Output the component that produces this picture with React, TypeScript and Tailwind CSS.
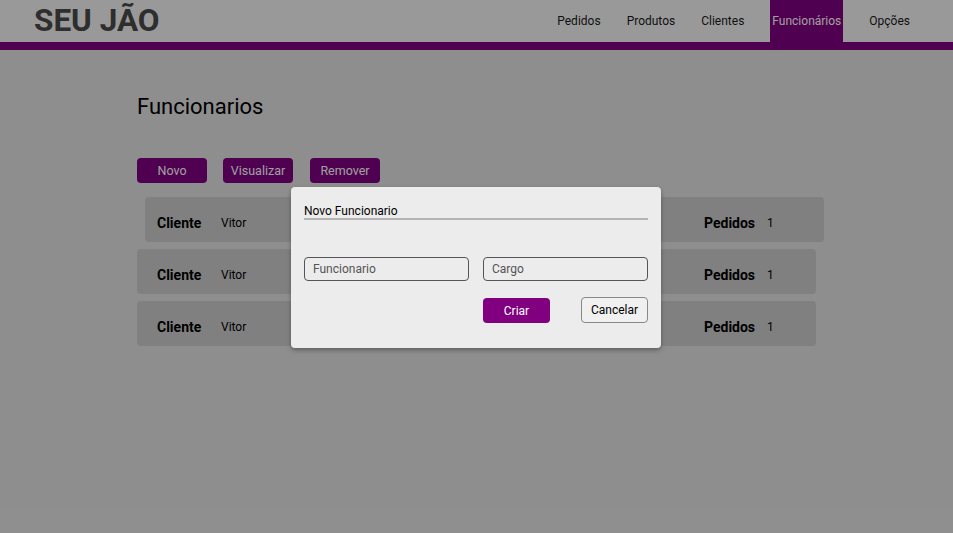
import React from "react";

const navItems = ["Pedidos", "Produtos", "Clientes", "Funcionários", "Opções"];

function Row({ first }: { first?: boolean }) {
  return (
    <div
      className={
        "flex items-center h-[45px] w-[679px] rounded bg-[#cdcdcd] pt-[7px] " +
        (first ? "ml-2 pl-3" : "pl-5")
      }
    >
      <div className="flex items-center w-[547px]">
        <span className="w-[64px] text-[14px] font-bold">Cliente</span>
        <span className="text-[12px]">Vitor</span>
      </div>
      <span className="w-[63px] text-[14px] font-bold">Pedidos</span>
      <span className="text-[12px]">1</span>
    </div>
  );
}

export default function App() {
  return (
    <div className="relative min-h-screen bg-[#e4e4e4] text-black font-['Roboto',sans-serif]">
      {/* Cabeçalho */}
      <header className="bg-[#f6f6f6] border-b-8 border-[#800080]">
        <div className="flex items-center justify-between h-[42px] pl-[34px] pr-[43px]">
          <h1 className="text-[31.5px] font-bold text-[#4a4a4a] leading-none">SEU JÃO</h1>
          <nav className="flex h-full gap-[26px] text-[12px] text-[#1a1a1a]">
            {navItems.map((item) =>
              item === "Funcionários" ? (
                <a key={item} className="flex items-center h-full px-[2px] bg-[#800080] text-white">
                  {item}
                </a>
              ) : (
                <a key={item} className="flex items-center h-full">
                  {item}
                </a>
              )
            )}
          </nav>
        </div>
      </header>

      <main className="pl-[137px] pt-[44px]">
        <h2 className="text-[22px] leading-[26px]">Funcionarios</h2>

        <div className="flex gap-4 mt-[38px]">
          {["Novo", "Visualizar", "Remover"].map((b, i) => (
            <button
              key={b}
              className={
                "w-[70px] h-[25px] rounded-sm bg-[#800080] text-white text-[12.5px] pt-[1px] " +
                (i === 2 ? "ml-[1px]" : "")
              }
            >
              {b}
            </button>
          ))}
        </div>

        <div className="flex flex-col gap-[7px] mt-[14px]">
          <Row first />
          <Row />
          <Row />
        </div>
      </main>

      {/* Sobreposição do modal */}
      <div className="absolute inset-0 bg-black/[0.375]">
        <div className="absolute left-[291px] top-[187px] w-[370px] h-[161px] rounded-sm bg-[#ececec] shadow-[0_2px_4px_rgba(0,0,0,0.35)] px-[13px] pt-[17px]">
          <div className="text-[12px] leading-[14px] border-b-2 border-[#b3b3b3]">
            Novo Funcionario
          </div>
          <div className="flex justify-between mt-[37px]">
            <input
              placeholder="Funcionario"
              className="w-[165px] h-[24px] border border-[#555] rounded-sm bg-transparent px-2 text-[12px] placeholder:text-[#555] outline-none"
            />
            <input
              placeholder="Cargo"
              className="w-[165px] h-[24px] border border-[#555] rounded-sm bg-transparent px-2 text-[12px] placeholder:text-[#555] outline-none"
            />
          </div>
          <div className="flex justify-end gap-[31px] mt-[16px]">
            <button className="w-[67px] h-[25px] mt-[1px] rounded-sm bg-[#800080] text-white text-[12px]">
              Criar
            </button>
            <button className="w-[67px] h-[26px] rounded-sm border border-[#888] bg-[#f0f0f0] text-[12px]">
              Cancelar
            </button>
          </div>
        </div>
      </div>
    </div>
  );
}
